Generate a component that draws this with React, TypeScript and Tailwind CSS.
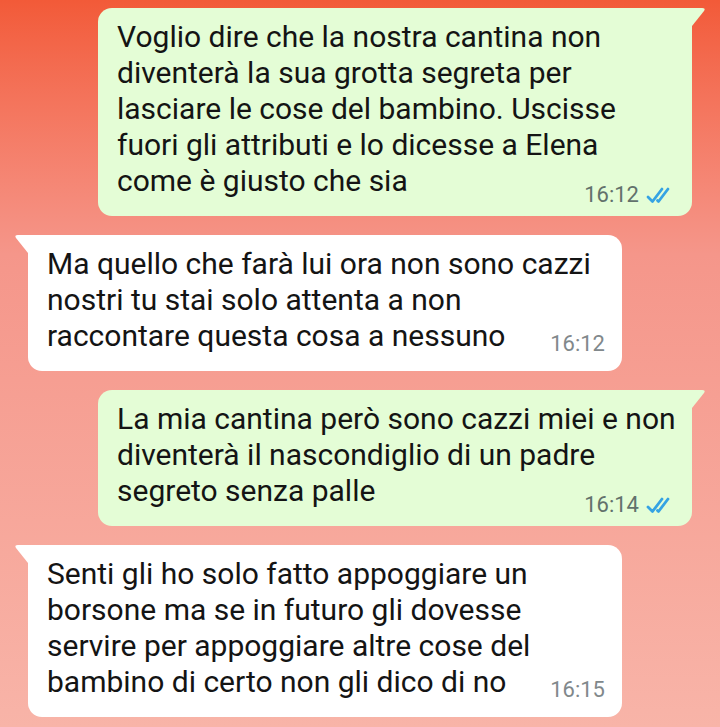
import React from 'react';

type Message = {
    id: number;
    out: boolean;
    lines: string[];
    time: string;
};

const messages: Message[] = [
    {
        id: 1,
        out: true,
        lines: [
            'Voglio dire che la nostra cantina non',
            'diventerà la sua grotta segreta per',
            'lasciare le cose del bambino. Uscisse',
            'fuori gli attributi e lo dicesse a Elena',
            'come è giusto che sia',
        ],
        time: '16:12',
    },
    {
        id: 2,
        out: false,
        lines: [
            'Ma quello che farà lui ora non sono cazzi',
            'nostri tu stai solo attenta a non',
            'raccontare questa cosa a nessuno',
        ],
        time: '16:12',
    },
    {
        id: 3,
        out: true,
        lines: [
            'La mia cantina però sono cazzi miei e non',
            'diventerà il nascondiglio di un padre',
            'segreto senza palle',
        ],
        time: '16:14',
    },
    {
        id: 4,
        out: false,
        lines: [
            'Senti gli ho solo fatto appoggiare un',
            'borsone ma se in futuro gli dovesse',
            'servire per appoggiare altre cose del',
            'bambino di certo non gli dico di no',
        ],
        time: '16:15',
    },
];

const DoubleCheck: React.FC = () => (
    <svg width="29" height="17" viewBox="0 0 29 17" fill="none" className="ml-[7px]">
        <path d="M2 10 L6.5 14.5 L16 2" stroke="#35a3e3" strokeWidth="2.8" strokeLinecap="round" strokeLinejoin="round" />
        <path d="M11.5 13.5 L12.5 14.5 L22 2" stroke="#35a3e3" strokeWidth="2.8" strokeLinecap="round" strokeLinejoin="round" />
    </svg>
);

const Bubble: React.FC<{ msg: Message }> = ({ msg }) => {
    const last = msg.lines[msg.lines.length - 1];
    const head = msg.lines.slice(0, -1);

    return (
        <div
            className={`relative w-[594px] pt-[11px] pb-[17px] pl-[19px] pr-[17px] rounded-[14px] ${
                msg.out ? 'ml-[98px] bg-[#e4fdd6] rounded-tr-none' : 'ml-[28px] bg-white rounded-tl-none'
            }`}
        >
            {/* tail */}
            {msg.out ? (
                <svg width="14" height="18" viewBox="0 0 14 18" className="absolute left-full top-0">
                    <path d="M0 0 H10 Q14 0 12 3 L0 18 Z" fill="#e4fdd6" />
                </svg>
            ) : (
                <svg width="14" height="18" viewBox="0 0 14 18" className="absolute right-full top-0">
                    <path d="M14 0 H4 Q0 0 2 3 L14 18 Z" fill="#ffffff" />
                </svg>
            )}

            <div className="text-[30px] leading-[36px] text-[#141414] whitespace-nowrap">
                {head.map((line, i) => (
                    <div key={i}>{line}</div>
                ))}
                <div className="flex items-end justify-between">
                    <span>{last}</span>
                    <span
                        className={`flex items-center text-[22px] leading-none ${
                            msg.out ? 'text-[#62716c] -mb-[7px]' : 'text-[#81888b] -mb-[1px]'
                        }`}
                    >
                        {msg.time}
                        {msg.out && <DoubleCheck />}
                    </span>
                </div>
            </div>
        </div>
    );
};

export default function App() {
    return (
        <div
            className="w-[720px] h-[727px] overflow-hidden bg-linear-to-b from-[#f25a38] via-[#f5968a] via-35% to-[#f8b4a8] pt-[8px] flex flex-col gap-[19px]"
            style={{ fontFamily: 'Roboto, "Noto Sans", sans-serif' }}
        >
            {messages.map((m) => (
                <Bubble key={m.id} msg={m} />
            ))}
        </div>
    );
}
